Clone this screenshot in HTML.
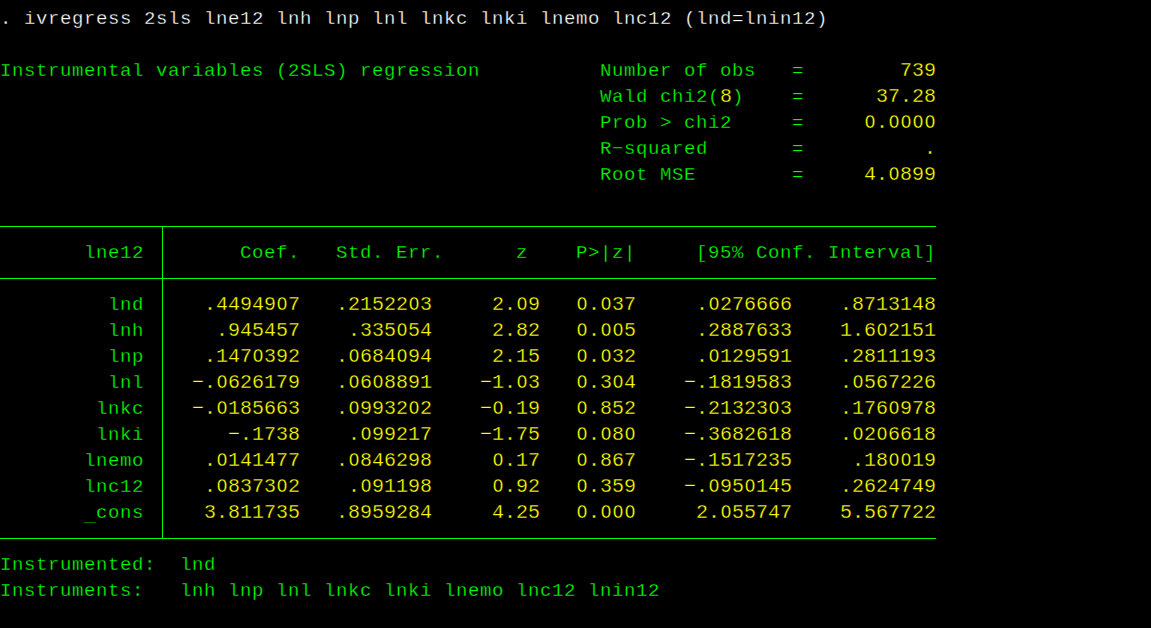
<!DOCTYPE html>
<html><head><meta charset="utf-8"><style>
html,body{margin:0;padding:0;background:#000;}
body{width:1151px;height:628px;overflow:hidden;position:relative;}
.r{position:absolute;left:0;white-space:pre;font-family:"Liberation Mono",monospace;font-size:19.0px;letter-spacing:0.5981px;line-height:26px;height:26px;-webkit-text-stroke:0.3px #000;}
.w{color:#ffffff} .g{color:#00ff00} .y{color:#ffff00;font-size:20.0px;letter-spacing:-0.0020px}
.h{position:absolute;left:0;width:936px;height:1px;background:#00ff00}
.z{display:inline-block;transform:scaleX(0.88)}
.v{position:absolute;left:162px;top:226px;width:1px;height:313px;background:#00ff00}
</style></head><body>
<div class="r" style="top:5.70px"><span class="w">. ivregress 2sls lne12 lnh lnp lnl lnkc lnki lnemo lnc12 (lnd=lnin12)</span></div>
<div class="r" style="top:57.70px"><span class="g">Instrumental variables (2SLS) regression          Number of obs   = </span><span class="y">       739</span></div>
<div class="r" style="top:83.70px"><span class="g">                                                  Wald chi2(</span><span class="y">8</span><span class="g">)    = </span><span class="y">     37.28</span></div>
<div class="r" style="top:109.70px"><span class="g">                                                  Prob &gt; chi2     = </span><span class="y">    <span class="z">O</span>.<span class="z">O</span><span class="z">O</span><span class="z">O</span><span class="z">O</span></span></div>
<div class="r" style="top:135.70px"><span class="g">                                                  R−squared       = </span><span class="y">         .</span></div>
<div class="r" style="top:161.70px"><span class="g">                                                  Root MSE        = </span><span class="y">    4.<span class="z">O</span>899</span></div>
<div class="r" style="top:239.70px"><span class="g">       lne12        Coef.   Std. Err.      z    P&gt;|z|     [95% Conf. Interval]</span></div>
<div class="r" style="top:291.70px"><span class="g">         lnd  </span><span class="y">   .44949<span class="z">O</span>7   .21522<span class="z">O</span>3     2.<span class="z">O</span>9   <span class="z">O</span>.<span class="z">O</span>37     .<span class="z">O</span>276666    .8713148</span></div>
<div class="r" style="top:317.70px"><span class="g">         lnh  </span><span class="y">    .945457    .335<span class="z">O</span>54     2.82   <span class="z">O</span>.<span class="z">O</span><span class="z">O</span>5     .2887633    1.6<span class="z">O</span>2151</span></div>
<div class="r" style="top:343.70px"><span class="g">         lnp  </span><span class="y">   .147<span class="z">O</span>392   .<span class="z">O</span>684<span class="z">O</span>94     2.15   <span class="z">O</span>.<span class="z">O</span>32     .<span class="z">O</span>129591    .2811193</span></div>
<div class="r" style="top:369.70px"><span class="g">         lnl  </span><span class="y">  −.<span class="z">O</span>626179   .<span class="z">O</span>6<span class="z">O</span>8891    −1.<span class="z">O</span>3   <span class="z">O</span>.3<span class="z">O</span>4    −.1819583    .<span class="z">O</span>567226</span></div>
<div class="r" style="top:395.70px"><span class="g">        lnkc  </span><span class="y">  −.<span class="z">O</span>185663   .<span class="z">O</span>9932<span class="z">O</span>2    −<span class="z">O</span>.19   <span class="z">O</span>.852    −.21323<span class="z">O</span>3    .176<span class="z">O</span>978</span></div>
<div class="r" style="top:421.70px"><span class="g">        lnki  </span><span class="y">     −.1738    .<span class="z">O</span>99217    −1.75   <span class="z">O</span>.<span class="z">O</span>8<span class="z">O</span>    −.3682618    .<span class="z">O</span>2<span class="z">O</span>6618</span></div>
<div class="r" style="top:447.70px"><span class="g">       lnemo  </span><span class="y">   .<span class="z">O</span>141477   .<span class="z">O</span>846298     <span class="z">O</span>.17   <span class="z">O</span>.867    −.1517235     .18<span class="z">O</span><span class="z">O</span>19</span></div>
<div class="r" style="top:473.70px"><span class="g">       lnc12  </span><span class="y">   .<span class="z">O</span>8373<span class="z">O</span>2    .<span class="z">O</span>91198     <span class="z">O</span>.92   <span class="z">O</span>.359    −.<span class="z">O</span>95<span class="z">O</span>145    .2624749</span></div>
<div class="r" style="top:499.70px"><span class="g">       <span style="position:relative;top:3px">_</span>cons  </span><span class="y">   3.811735   .8959284     4.25   <span class="z">O</span>.<span class="z">O</span><span class="z">O</span><span class="z">O</span>     2.<span class="z">O</span>55747    5.567722</span></div>
<div class="r" style="top:551.70px"><span class="g">Instrumented:  lnd</span></div>
<div class="r" style="top:577.70px"><span class="g">Instruments:   lnh lnp lnl lnkc lnki lnemo lnc12 lnin12</span></div>
<div class="h" style="top:226px"></div>
<div class="h" style="top:278px"></div>
<div class="h" style="top:538px"></div>
<div class="v"></div>
</body></html>
